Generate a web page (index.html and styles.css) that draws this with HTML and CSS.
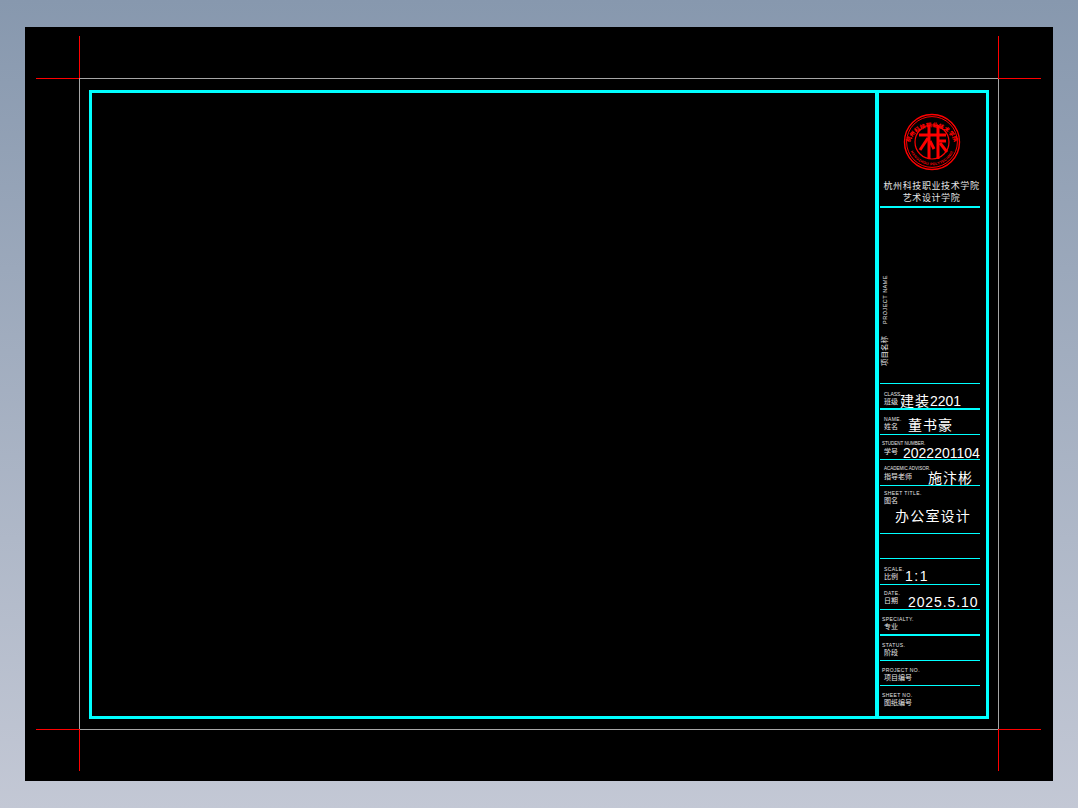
FILE: index.html
```html
<!DOCTYPE html>
<html lang="en">
<head>
    <meta charset="UTF-8">
    <meta name="viewport" content="width=device-width, initial-scale=1.0">
    <title>A3 图框</title>
    <link rel="stylesheet" href="styles.css">
</head>
<body>
    <div class="canvas">
        <!-- crop marks and sheet edge sit on the drawing canvas -->
        <div class="mark edge-top"></div>
        <div class="mark edge-bottom"></div>
        <div class="mark edge-left"></div>
        <div class="mark edge-right"></div>
        <div class="mark crop-tl-h"></div>
        <div class="mark crop-tl-v"></div>
        <div class="mark crop-tr-h"></div>
        <div class="mark crop-tr-v"></div>
        <div class="mark crop-bl-h"></div>
        <div class="mark crop-bl-v"></div>
        <div class="mark crop-br-h"></div>
        <div class="mark crop-br-v"></div>

        <div class="frame">
            <div class="drawing-area"></div>
            <div class="title-block">
                <div class="row logo-row">
                    <svg class="logo" width="60" height="60" viewBox="0 0 60 60">
                        <defs>
                            <path id="arcTop" d="M6.5 34 A24 24 0 0 1 53.5 34"/>
                            <path id="arcBottom" d="M8 38 A23.5 23.5 0 0 0 52 38"/>
                        </defs>
                        <circle cx="30" cy="30" r="27.5" fill="none" stroke="#f00" stroke-width="1.4"/>
                        <circle cx="30" cy="30" r="25.4" fill="none" stroke="#f00" stroke-width="1"/>
                        <circle cx="30" cy="30" r="17" fill="none" stroke="#f00" stroke-width="1.2"/>
                        <text class="logo-ring"><textPath href="#arcTop" startOffset="50%" text-anchor="middle">杭州科技职业技术学院</textPath></text>
                        <text class="logo-ring-en"><textPath href="#arcBottom" startOffset="50%" text-anchor="middle">HANGZHOU POLYTECHNIC</textPath></text>
                        <g fill="none" stroke="#f00" stroke-width="3">
                            <path d="M17 23 H44"/>
                            <path d="M27 13 V47"/>
                            <path d="M36 13 V47"/>
                            <path d="M26 26 L18 38"/>
                            <path d="M28 29 L32 37"/>
                            <path d="M36 29 H44"/>
                            <path d="M38 31 L45 40"/>
                        </g>
                    </svg>
                    <div class="school">杭州科技职业技术学院</div>
                    <div class="school">艺术设计学院</div>
                </div>

                <div class="row project-row">
                    <div class="project-label">
                        <span class="project-cn">项目名称</span>
                        <span class="project-en">PROJECT NAME</span>
                    </div>
                </div>

                <div class="row class-row">
                    <div class="labels"><span class="en">CLASS</span><span class="cn">班级</span></div>
                    <div class="value">建装<span class="num">2201</span></div>
                </div>
                <div class="row name-row">
                    <div class="labels"><span class="en">NAME.</span><span class="cn">姓名</span></div>
                    <div class="value">董书豪</div>
                </div>
                <div class="row student-row">
                    <div class="labels"><span class="en">STUDENT NUMBER.</span><span class="cn">学号</span></div>
                    <div class="value num">2022201104</div>
                </div>
                <div class="row advisor-row">
                    <div class="labels"><span class="en">ACADEMIC ADVISOR.</span><span class="cn">指导老师</span></div>
                    <div class="value">施汴彬</div>
                </div>
                <div class="row sheet-row">
                    <div class="labels"><span class="en">SHEET TITLE.</span><span class="cn">图名</span></div>
                    <div class="value">办公室设计</div>
                </div>
                <div class="row blank-row"></div>
                <div class="row scale-row">
                    <div class="labels"><span class="en">SCALE.</span><span class="cn">比例</span></div>
                    <div class="value num">1:1</div>
                </div>
                <div class="row date-row">
                    <div class="labels"><span class="en">DATE.</span><span class="cn">日期</span></div>
                    <div class="value num">2025.5.10</div>
                </div>
                <div class="row major-row">
                    <div class="labels"><span class="en">SPECIALTY.</span><span class="cn">专业</span></div>
                </div>
                <div class="row status-row">
                    <div class="labels"><span class="en">STATUS.</span><span class="cn">阶段</span></div>
                </div>
                <div class="row project-no-row">
                    <div class="labels"><span class="en">PROJECT NO.</span><span class="cn">项目编号</span></div>
                </div>
                <div class="row sheet-no-row">
                    <div class="labels"><span class="en">SHEET NO.</span><span class="cn">图纸编号</span></div>
                </div>
            </div>
        </div>
    </div>
</body>
</html>
```

FILE: styles.css
```css
html, body {
    height: 100%;
}
body {
    margin: 0;
    padding: 27px 25px;
    box-sizing: border-box;
    overflow: hidden;
    background: linear-gradient(#8798ae, #c3c8d5);
    font-family: "Liberation Sans", "Noto Sans CJK SC", sans-serif;
    color: #e6e6e6;
}
.canvas {
    position: relative;
    width: 1028px;
    height: 754px;
    padding: 63px 64px 62px 64px;
    box-sizing: border-box;
    background-color: #000;
}

/* sheet edge, gray */
.mark {
    position: absolute;
    background-color: #a6a6a6;
}
.edge-top { left: 54px; top: 51px; width: 919px; height: 1px; }
.edge-bottom { left: 54px; top: 702px; width: 919px; height: 1px; }
.edge-left { left: 54px; top: 51px; width: 1px; height: 651px; }
.edge-right { left: 973px; top: 51px; width: 1px; height: 651px; }

/* crop marks, red */
.crop-tl-h, .crop-tl-v, .crop-tr-h, .crop-tr-v, .crop-bl-h, .crop-bl-v, .crop-br-h, .crop-br-v {
    background-color: #f00;
}
.crop-tl-h { left: 11px; top: 51px; width: 43px; height: 1px; }
.crop-tl-v { left: 54px; top: 9px; width: 1px; height: 42px; }
.crop-tr-h { left: 973px; top: 51px; width: 43px; height: 1px; }
.crop-tr-v { left: 973px; top: 9px; width: 1px; height: 42px; }
.crop-bl-h { left: 11px; top: 702px; width: 43px; height: 1px; }
.crop-bl-v { left: 54px; top: 702px; width: 1px; height: 42px; }
.crop-br-h { left: 973px; top: 702px; width: 43px; height: 1px; }
.crop-br-v { left: 973px; top: 702px; width: 1px; height: 42px; }

.frame {
    display: flex;
    width: 900px;
    height: 629px;
    box-sizing: border-box;
    border: 3px solid #0ff;
}
.drawing-area {
    flex: 1;
    border-right: 4px solid #0ff;
}
.title-block {
    display: flex;
    flex-direction: column;
    width: 107px;
    padding: 0 6px 0 1px;
    box-sizing: border-box;
}

.row {
    display: flex;
    flex: none;
    box-sizing: border-box;
    border-bottom: 1px solid #0ff;
    padding-left: 4px;
}
.logo-row {
    display: block;
    height: 115px;
    padding: 19px 0 0 3px;
    border-bottom-width: 2px;
    text-align: center;
}
.logo {
    display: block;
    margin: 0 auto 8px;
}
.logo-ring {
    font-family: "Noto Sans CJK SC", sans-serif;
    font-size: 5.5px;
    font-weight: 900;
    letter-spacing: 0.3px;
    fill: #f00;
}
.logo-ring-en {
    font-size: 3.6px;
    font-weight: 700;
    letter-spacing: 0.3px;
    fill: #f00;
}
.school {
    font-size: 9px;
    line-height: 12px;
    letter-spacing: 0.6px;
    white-space: nowrap;
}

.project-row {
    height: 176px;
    align-items: flex-end;
    padding-left: 1px;
    padding-bottom: 17px;
}
.project-label {
    display: flex;
    gap: 12px;
    writing-mode: vertical-rl;
    text-orientation: sideways;
    transform: rotate(180deg);
    white-space: nowrap;
    line-height: 8px;
}
.project-cn {
    font-size: 7.4px;
    letter-spacing: 0.1px;
}
.project-en {
    font-size: 5.5px;
    letter-spacing: 0.5px;
}

/* small two-line labels */
.labels {
    display: flex;
    flex-direction: column;
    flex: none;
    width: 16px;
    white-space: nowrap;
}
.en {
    font-size: 5px;
    line-height: 7px;
    letter-spacing: 0.4px;
}
.cn {
    font-size: 7px;
    line-height: 8px;
}
.value {
    font-family: "Noto Sans CJK SC", sans-serif;
    font-size: 14px;
    letter-spacing: 1px;
    line-height: 13px;
    white-space: nowrap;
    color: #fff;
}
.num {
    font-family: "Liberation Sans", sans-serif;
    letter-spacing: 0;
}

.class-row { height: 26px; padding-top: 7px; border-bottom-width: 2px; }
.class-row .en { letter-spacing: 0; }
.class-row .value { margin-top: 3px; }
.name-row { height: 25px; padding-top: 6px; }
.name-row .value { margin: 2px 0 0 8px; }
.student-row { height: 25px; padding: 6px 0 0 2px; }
.student-row .labels { width: 21px; }
.student-row .en { font-size: 4.5px; line-height: 6px; letter-spacing: 0; }
.student-row .cn { padding: 1px 0 0 2px; }
.student-row .value { margin-top: 6px; }
.advisor-row { height: 26px; padding-top: 6px; }
.advisor-row .labels { width: 45px; }
.advisor-row .en { font-size: 4.5px; line-height: 5px; letter-spacing: 0; }
.advisor-row .cn { padding-top: 2px; }
.advisor-row .value { margin: 5px 0 0 -1px; }
.sheet-row { height: 48px; padding-top: 4px; }
.sheet-row .value { margin: 19px 0 0 -5px; letter-spacing: 1.2px; }
.blank-row { height: 25px; }
.scale-row { height: 26px; padding-top: 7px; }
.scale-row .value { margin: 4px 0 0 5px; letter-spacing: 1.5px; }
.date-row { height: 25px; padding-top: 5px; }
.date-row .value { margin: 6px 0 0 8px; letter-spacing: 0.9px; }
.major-row { height: 26px; padding: 6px 0 0 2px; border-bottom-width: 2px; }
.major-row .cn { padding-left: 2px; }
.status-row { height: 25px; padding: 6px 0 0 2px; }
.status-row .cn { padding-left: 2px; }
.project-no-row { height: 25px; padding: 6px 0 0 2px; }
.project-no-row .cn { padding-left: 2px; }
.sheet-no-row { flex: 1; padding: 6px 0 0 2px; border-bottom: none; }
.sheet-no-row .cn { padding-left: 2px; }
```
